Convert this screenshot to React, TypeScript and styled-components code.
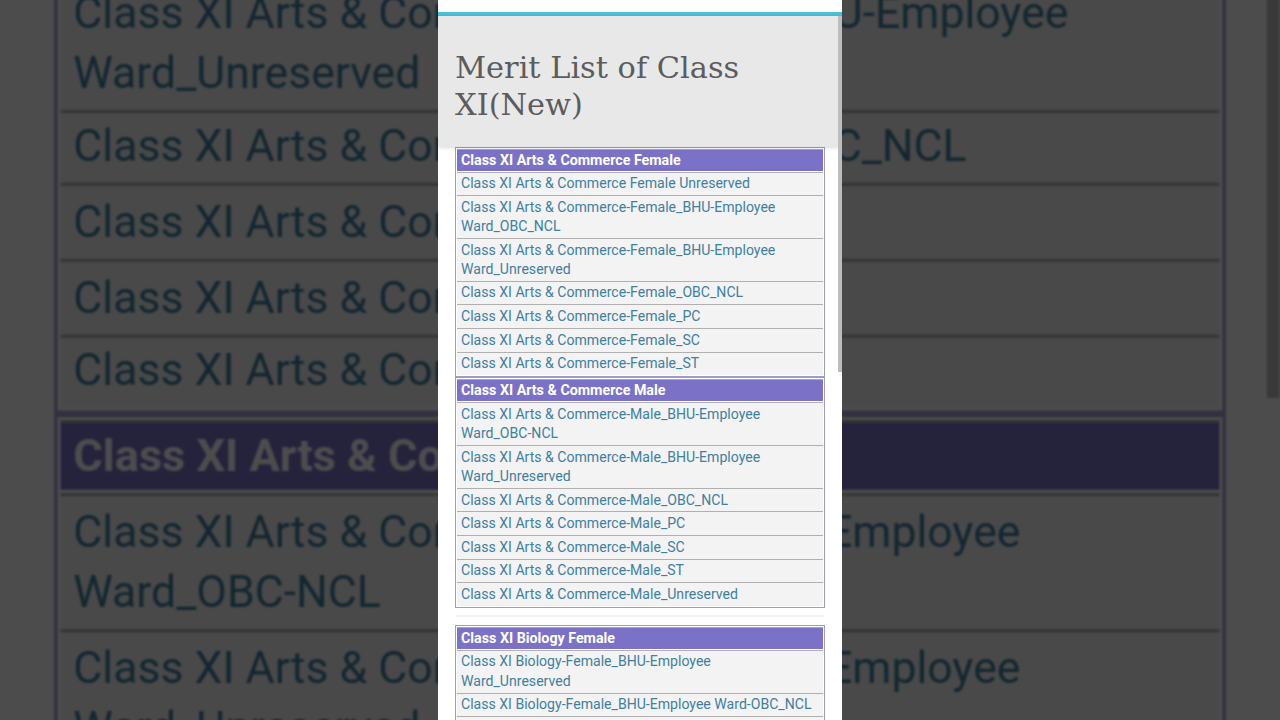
import styled, { createGlobalStyle } from "styled-components";

interface Group {
  title: string;
  links: string[];
  spaced?: boolean;
}

const groups: Group[] = [
  {
    title: "Class XI Arts & Commerce Female",
    links: [
      "Class XI Arts & Commerce Female Unreserved",
      "Class XI Arts & Commerce-Female_BHU-Employee Ward_OBC_NCL",
      "Class XI Arts & Commerce-Female_BHU-Employee Ward_Unreserved",
      "Class XI Arts & Commerce-Female_OBC_NCL",
      "Class XI Arts & Commerce-Female_PC",
      "Class XI Arts & Commerce-Female_SC",
      "Class XI Arts & Commerce-Female_ST",
    ],
  },
  {
    title: "Class XI Arts & Commerce Male",
    links: [
      "Class XI Arts & Commerce-Male_BHU-Employee Ward_OBC-NCL",
      "Class XI Arts & Commerce-Male_BHU-Employee Ward_Unreserved",
      "Class XI Arts & Commerce-Male_OBC_NCL",
      "Class XI Arts & Commerce-Male_PC",
      "Class XI Arts & Commerce-Male_SC",
      "Class XI Arts & Commerce-Male_ST",
      "Class XI Arts & Commerce-Male_Unreserved",
    ],
  },
  {
    title: "Class XI Biology Female",
    spaced: true,
    links: [
      "Class XI Biology-Female_BHU-Employee Ward_Unreserved",
      "Class XI Biology-Female_BHU-Employee Ward-OBC_NCL",
      "Class XI Biology-Female_OBC_NCL",
    ],
  },
];

function MeritPage() {
  return (
    <>
      <TopBar />
      <Header>
        <Title>Merit List of Class XI(New)</Title>
      </Header>
      <List>
        {groups.map((group) => (
          <div key={group.title}>
            {group.spaced && <Gap />}
            <Card>
              <CardTitle>{group.title}</CardTitle>
              {group.links.map((link) => (
                <Row key={link}>{link}</Row>
              ))}
            </Card>
          </div>
        ))}
      </List>
      <Thumb />
    </>
  );
}

export default function App() {
  return (
    <Stage>
      <GlobalStyle />
      <Backdrop aria-hidden="true">
        <MeritPage />
      </Backdrop>
      <Phone>
        <MeritPage />
      </Phone>
    </Stage>
  );
}

const GlobalStyle = createGlobalStyle`
  html, body {
    margin: 0;
    padding: 0;
    background: #4d4d4d;
  }
`;

const Stage = styled.div`
  position: relative;
  display: flex;
  justify-content: center;
  width: 1280px;
  height: 720px;
  overflow: hidden;
  background: #4d4d4d;
  font-family: Roboto, "Liberation Sans", sans-serif;
`;

const Phone = styled.main`
  position: relative;
  flex: none;
  width: 404px;
  height: 720px;
  overflow: hidden;
  background: #ffffff;
`;

// the same page again, enlarged and dimmed behind the real one
const Backdrop = styled(Phone)`
  position: absolute;
  top: 0;
  left: 438px;
  transform: scale(3.166);
  transform-origin: 202px 360px;
  filter: blur(0.4px) brightness(0.3);
`;

const TopBar = styled.div`
  height: 12px;
  background: #ffffff;
  border-bottom: 4px solid #4cc3da;
`;

const Header = styled.header`
  position: relative;
  z-index: 1;
  box-sizing: border-box;
  height: 130px;
  padding: 33px 17px 0;
  background: #e8e8e8;
  box-shadow: 0 1px 5px rgba(0, 0, 0, 0.18);
`;

const Title = styled.h1`
  margin: 0;
  width: 330px;
  font-family: "DejaVu Serif", "Liberation Serif", serif;
  font-size: 30.4px;
  font-weight: 400;
  line-height: 37px;
  color: #5c5c5c;
`;

const List = styled.div`
  display: flex;
  flex-direction: column;
  padding: 0.5px 17px 0;
`;

const Gap = styled.div`
  height: 2px;
  margin: 7.4px 0 7.6px;
  background: #f4f4f4;
`;

const Card = styled.section`
  box-sizing: border-box;
  width: 370px;
  padding: 1px;
  border: 1px solid #9f9bc8;
  background: #ffffff;
`;

const CardTitle = styled.h2`
  box-sizing: border-box;
  height: 22px;
  margin: 0 0 1px;
  padding: 0 4px;
  border-top: 1px solid #a8a8a8;
  background: #7b72c8;
  font-size: 14.25px;
  font-weight: 700;
  line-height: 21px;
  color: #ffffff;
`;

const Row = styled.div`
  padding: 1.65px 4px;
  border-top: 1px solid #b0b0b0;
  background: #f3f3f3;
  font-size: 14.08px;
  line-height: 19.3px;
  color: #3f7f9f;
`;

const Thumb = styled.div`
  position: absolute;
  top: 16px;
  right: 0;
  z-index: 2;
  width: 4px;
  height: 356px;
  background: #bdbdbd;
`;
